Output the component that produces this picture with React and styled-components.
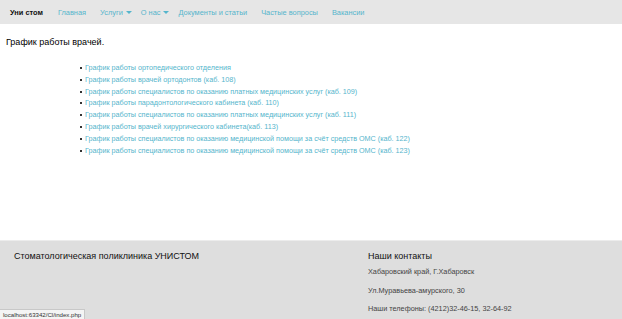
import styled, { createGlobalStyle } from "styled-components";

const GlobalStyle = createGlobalStyle`
  html, body {
    margin: 0;
    padding: 0;
    background: #fff;
    font-family: "Liberation Sans", Arial, sans-serif;
  }
`;

const links = [
  "График работы ортопедического отделения",
  "График работы врачей ортодонтов (каб. 108)",
  "График работы специалистов по оказанию платных медицинских услуг (каб. 109)",
  "График работы парадонтологического кабинета (каб. 110)",
  "График работы специалистов по оказанию платных медицинских услуг (каб. 111)",
  "График работы врачей хирургического кабинета(каб. 113)",
  "График работы специалистов по оказанию медицинской помощи за счёт средств ОМС (каб. 122)",
  "График работы специалистов по оказанию медицинской помощи за счёт средств ОМС (каб. 123)",
];

export default function App() {
  return (
    <Page>
      <GlobalStyle />
      <Navbar>
        <Brand>Уни стом</Brand>
        <NavLink>Главная</NavLink>
        <NavLink dropdown>Услуги <Caret /></NavLink>
        <NavLink dropdown>О нас <Caret /></NavLink>
        <NavLink>Документы и статьи</NavLink>
        <NavLink>Частые вопросы</NavLink>
        <NavLink>Вакансии</NavLink>
      </Navbar>

      <Main>
        <Title>График работы врачей.</Title>
        <List>
          {links.map((l, i) => (
            <li key={i}><a>{l}</a></li>
          ))}
        </List>
      </Main>

      <Footer>
        <FooterLeft>Стоматологическая поликлиника УНИСТОМ</FooterLeft>
        <Contacts>
          <h4>Наши контакты</h4>
          <p>Хабаровский край, Г.Хабаровск</p>
          <p>Ул.Муравьева-амурского, 30</p>
          <p>Наши телефоны: (4212)32-46-15, 32-64-92</p>
        </Contacts>
      </Footer>

      <StatusBar>localhost:63342/Cl/index.php</StatusBar>
    </Page>
  );
}

const Page = styled.div`
  position: relative;
  width: 622px;
  height: 319px;
  display: flex;
  flex-direction: column;
  overflow: hidden;
`;

const Navbar = styled.nav`
  height: 24px;
  background: #e6e6e6;
  display: flex;
  align-items: center;
  padding-left: 10px;
  gap: 14px;
  font-size: 7.4px;
  flex-shrink: 0;
`;

const Brand = styled.span`
  font-weight: bold;
  color: #111;
  margin-right: 1px;
`;

const NavLink = styled.span`
  color: #55b5cc;
  display: inline-flex;
  align-items: center;
  gap: 3px;
  margin-right: ${(p) => (p.dropdown ? "-5px" : "0")};
`;

const Caret = styled.span`
  display: inline-block;
  width: 0;
  height: 0;
  border-left: 3px solid transparent;
  border-right: 3px solid transparent;
  border-top: 3.5px solid #55b5cc;
`;

const Main = styled.main`
  flex: 1;
  padding: 13px 6px 0;
`;

const Title = styled.h2`
  margin: 0 0 15px;
  font-size: 9px;
  font-weight: normal;
  color: #000;
`;

const List = styled.ul`
  margin: 0;
  padding-left: 79px;
  list-style: none;
  font-size: 7.2px;
  line-height: 11.8px;

  li {
    position: relative;
  }
  li::before {
    content: "";
    position: absolute;
    left: -5px;
    top: 5px;
    width: 2px;
    height: 2px;
    background: #333;
  }
  a {
    color: #55b5cc;
  }
`;

const Footer = styled.footer`
  height: 79px;
  flex-shrink: 0;
  background: #dedede;
  border-top: 1px solid #ececec;
  display: flex;
  justify-content: space-between;
  padding: 10px 0 0 14px;
  box-sizing: border-box;
`;

const FooterLeft = styled.div`
  font-size: 9px;
  color: #111;
`;

const Contacts = styled.div`
  width: 254px;

  h4 {
    margin: 0 0 6px;
    font-size: 9px;
    font-weight: normal;
    color: #111;
  }
  p {
    margin: 0 0 9.5px;
    font-size: 7.3px;
    line-height: 9px;
    color: #444;
  }
`;

const StatusBar = styled.div`
  position: absolute;
  left: 0;
  bottom: 0;
  padding: 1px 3px;
  background: #f4f4f4;
  border: 1px solid #c8c8c8;
  border-left: none;
  border-bottom: none;
  font-size: 6.1px;
  color: #333;
`;
